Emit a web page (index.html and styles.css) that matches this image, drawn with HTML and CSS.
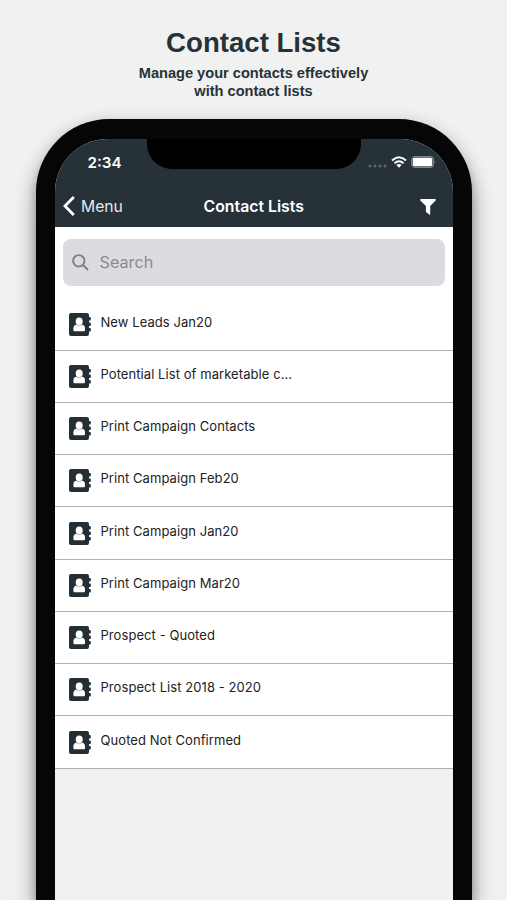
FILE: index.html
```html
<!DOCTYPE html>
<html lang="en">
<head>
<meta charset="utf-8">
<title>Contact Lists</title>
<link rel="stylesheet" href="styles.css">
</head>

<body>

<svg class="defs">
  <symbol id="contact" viewBox="0 0 22 23">
    <path fill="#232f34" d="M2 0H18Q20 0 20 2V4H21Q21.8 4 21.8 4.8V6.7Q21.8 7.5 21 7.5H20V9.5H21Q21.8 9.5 21.8 10.3V12.2Q21.8 13 21 13H20V15H21Q21.8 15 21.8 15.8V17.7Q21.8 18.5 21 18.5H20V21Q20 23 18 23H2Q0 23 0 21V2Q0 0 2 0Z"/>
    <ellipse cx="10.2" cy="8.4" rx="3.5" ry="4" fill="#fff"/>
    <path fill="#fff" d="M4.4 17V15.4Q4.4 12 7.6 11.4H12.8Q16 12 16 15.4V17Q16 18.2 14.8 18.2H5.6Q4.4 18.2 4.4 17Z"/>
    <path fill="none" stroke="#232f34" stroke-width=".35" d="M7 11.5Q10.2 14.2 13.4 11.5"/>
  </symbol>
</svg>

<div class="intro">
  <h1>Contact Lists</h1>
  <p>Manage your contacts effectively<br>with contact lists</p>
</div>

<div class="phone">
  <div class="screen">
    <div class="notch"></div>

    <div class="status">
      <span class="time">2:34</span>
      <svg class="signal" width="19" height="4" viewBox="0 0 19 4" fill="#5b686e">
        <circle cx="2" cy="2" r="1.5"/><circle cx="7" cy="2" r="1.5"/><circle cx="12" cy="2" r="1.5"/><circle cx="17" cy="2" r="1.5"/>
      </svg>
      <svg class="wifi" width="16" height="12" viewBox="0 0 16 12" fill="none" stroke="#fff" stroke-width="2">
        <path d="M1 4.6Q8-2 15 4.6M3.5 7.3Q8 3.1 12.5 7.3"/>
        <path fill="#fff" stroke="none" d="M5.4 9Q8 6.8 10.6 9L8 11.7Z"/>
      </svg>
      <svg class="battery" width="26" height="12" viewBox="0 0 26 12">
        <rect x=".7" y=".7" width="21.6" height="10.6" rx="3" fill="none" stroke="#7d878b" stroke-width="1.2"/>
        <rect x="1.8" y="1.8" width="19.4" height="8.4" rx="1.6" fill="#fff"/>
        <path d="M23.7 4Q25.2 6 23.7 8Z" fill="#7d878b"/>
      </svg>
    </div>

    <div class="navbar">
      <a class="back">
        <svg width="12" height="20" viewBox="0 0 12 20" fill="none" stroke="#fff" stroke-width="2.8"><path d="M10.8 1L2 10L10.8 19"/></svg>
        <span>Menu</span>
      </a>
      <h2>Contact Lists</h2>
      <svg class="filter" width="16" height="16" viewBox="0 0 16 16"><path fill="#fff" d="M.7 0H15.3Q16.2.7 15.6 1.4L10.2 7V15.4Q9.8 16 9.2 15.6L6.3 13.3Q5.9 13 5.9 12.5V7L.4 1.4Q-.2.7.7 0Z"/></svg>
    </div>

    <div class="content">
      <div class="search">
        <svg width="17" height="17" viewBox="0 0 17 17" fill="none" stroke="#7f7f84" stroke-width="1.9"><circle cx="6.8" cy="6.8" r="5.7"/><path d="M11 11L16 16"/></svg>
        <span>Search</span>
      </div>

      <ul class="lists">
        <li><svg><use href="#contact"/></svg><span>New Leads Jan20</span></li>
        <li><svg><use href="#contact"/></svg><span>Potential List of marketable c...</span></li>
        <li><svg><use href="#contact"/></svg><span>Print Campaign Contacts</span></li>
        <li><svg><use href="#contact"/></svg><span>Print Campaign Feb20</span></li>
        <li><svg><use href="#contact"/></svg><span>Print Campaign Jan20</span></li>
        <li><svg><use href="#contact"/></svg><span>Print Campaign Mar20</span></li>
        <li><svg><use href="#contact"/></svg><span>Prospect - Quoted</span></li>
        <li><svg><use href="#contact"/></svg><span>Prospect List 2018 - 2020</span></li>
        <li><svg><use href="#contact"/></svg><span>Quoted Not Confirmed</span></li>
      </ul>
    </div>
  </div>
</div>

</body>
</html>
```

FILE: styles.css
```css
* {
  box-sizing: border-box;
}

body {
  margin: 0;
  height: 900px;
  overflow: hidden;
  background: #f1f1f1;
  font-family: Inter, sans-serif;
}

h1, h2, p, ul {
  margin: 0;
  padding: 0;
}

svg {
  display: block;
  flex: none;
}

.defs {
  display: none;
}

.intro {
  height: 119px;
  padding-top: 27px;
  text-align: center;
  font-family: "Liberation Sans", Arial, sans-serif;
  font-weight: bold;
  color: #263238;
}

.intro h1 {
  font-size: 27.6px;
  line-height: 32px;
}

.intro p {
  margin-top: 6px;
  font-size: 14.6px;
  line-height: 17.5px;
}

.phone {
  width: 436px;
  height: 781px;
  margin-left: 36px;
  padding: 19.5px 19.5px 0 19px;
  background: #060606;
  border-radius: 73px 73px 0 0;
  box-shadow: 0 10px 8px rgba(0, 0, 0, .2), 0 18px 24px rgba(0, 0, 0, .25), 0 4px 18px rgba(0, 0, 0, .2);
}

.screen {
  position: relative;
  height: 100%;
  background: #f1f1f1;
  border-radius: 53px 53px 0 0;
  overflow: hidden;
}

.notch {
  position: absolute;
  top: 0;
  left: 92px;
  width: 214px;
  height: 30.5px;
  background: #000;
  border-radius: 0 0 25px 25px;
}

.status {
  display: flex;
  align-items: center;
  height: 47.5px;
  padding: 0 16px 0 32.5px;
  background: #263238;
}

.time {
  flex: 1;
  font-size: 15.2px;
  font-weight: 600;
  color: #fff;
}

.signal {
  margin: 8px 4px 0 0;
}

.wifi {
  margin-right: 4px;
}

.navbar {
  display: grid;
  grid-template-columns: 1fr auto 1fr;
  align-items: center;
  height: 41px;
  padding: 0 8px 1px;
  background: #263238;
  color: #fff;
}

.back {
  display: flex;
  align-items: center;
  gap: 6px;
  font-size: 15.7px;
  color: #e4e8ea;
}

.navbar h2 {
  font-size: 15.8px;
  font-weight: 600;
}

.filter {
  justify-self: end;
  margin: 1px 9px 0 0;
}

.content {
  padding-top: 12px;
  background: #fff;
}

.search {
  display: flex;
  align-items: center;
  gap: 10.5px;
  height: 46.5px;
  margin: 0 7.5px 0 8px;
  padding-left: 9px;
  border-radius: 8px;
  background: #dcdbe0;
  font-size: 16.2px;
  color: #8a8a8f;
}

.lists {
  padding-top: 12.8px;
  list-style: none;
}

.lists li {
  display: flex;
  height: 52.26px;
  padding: 14.4px 0 0 14px;
  border-bottom: 1px solid #b0b0b0;
  font-size: 13px;
  line-height: 18px;
  letter-spacing: .07px;
  color: #222;
}

.lists svg {
  width: 22px;
  height: 23px;
  margin-right: 9.5px;
}
```
